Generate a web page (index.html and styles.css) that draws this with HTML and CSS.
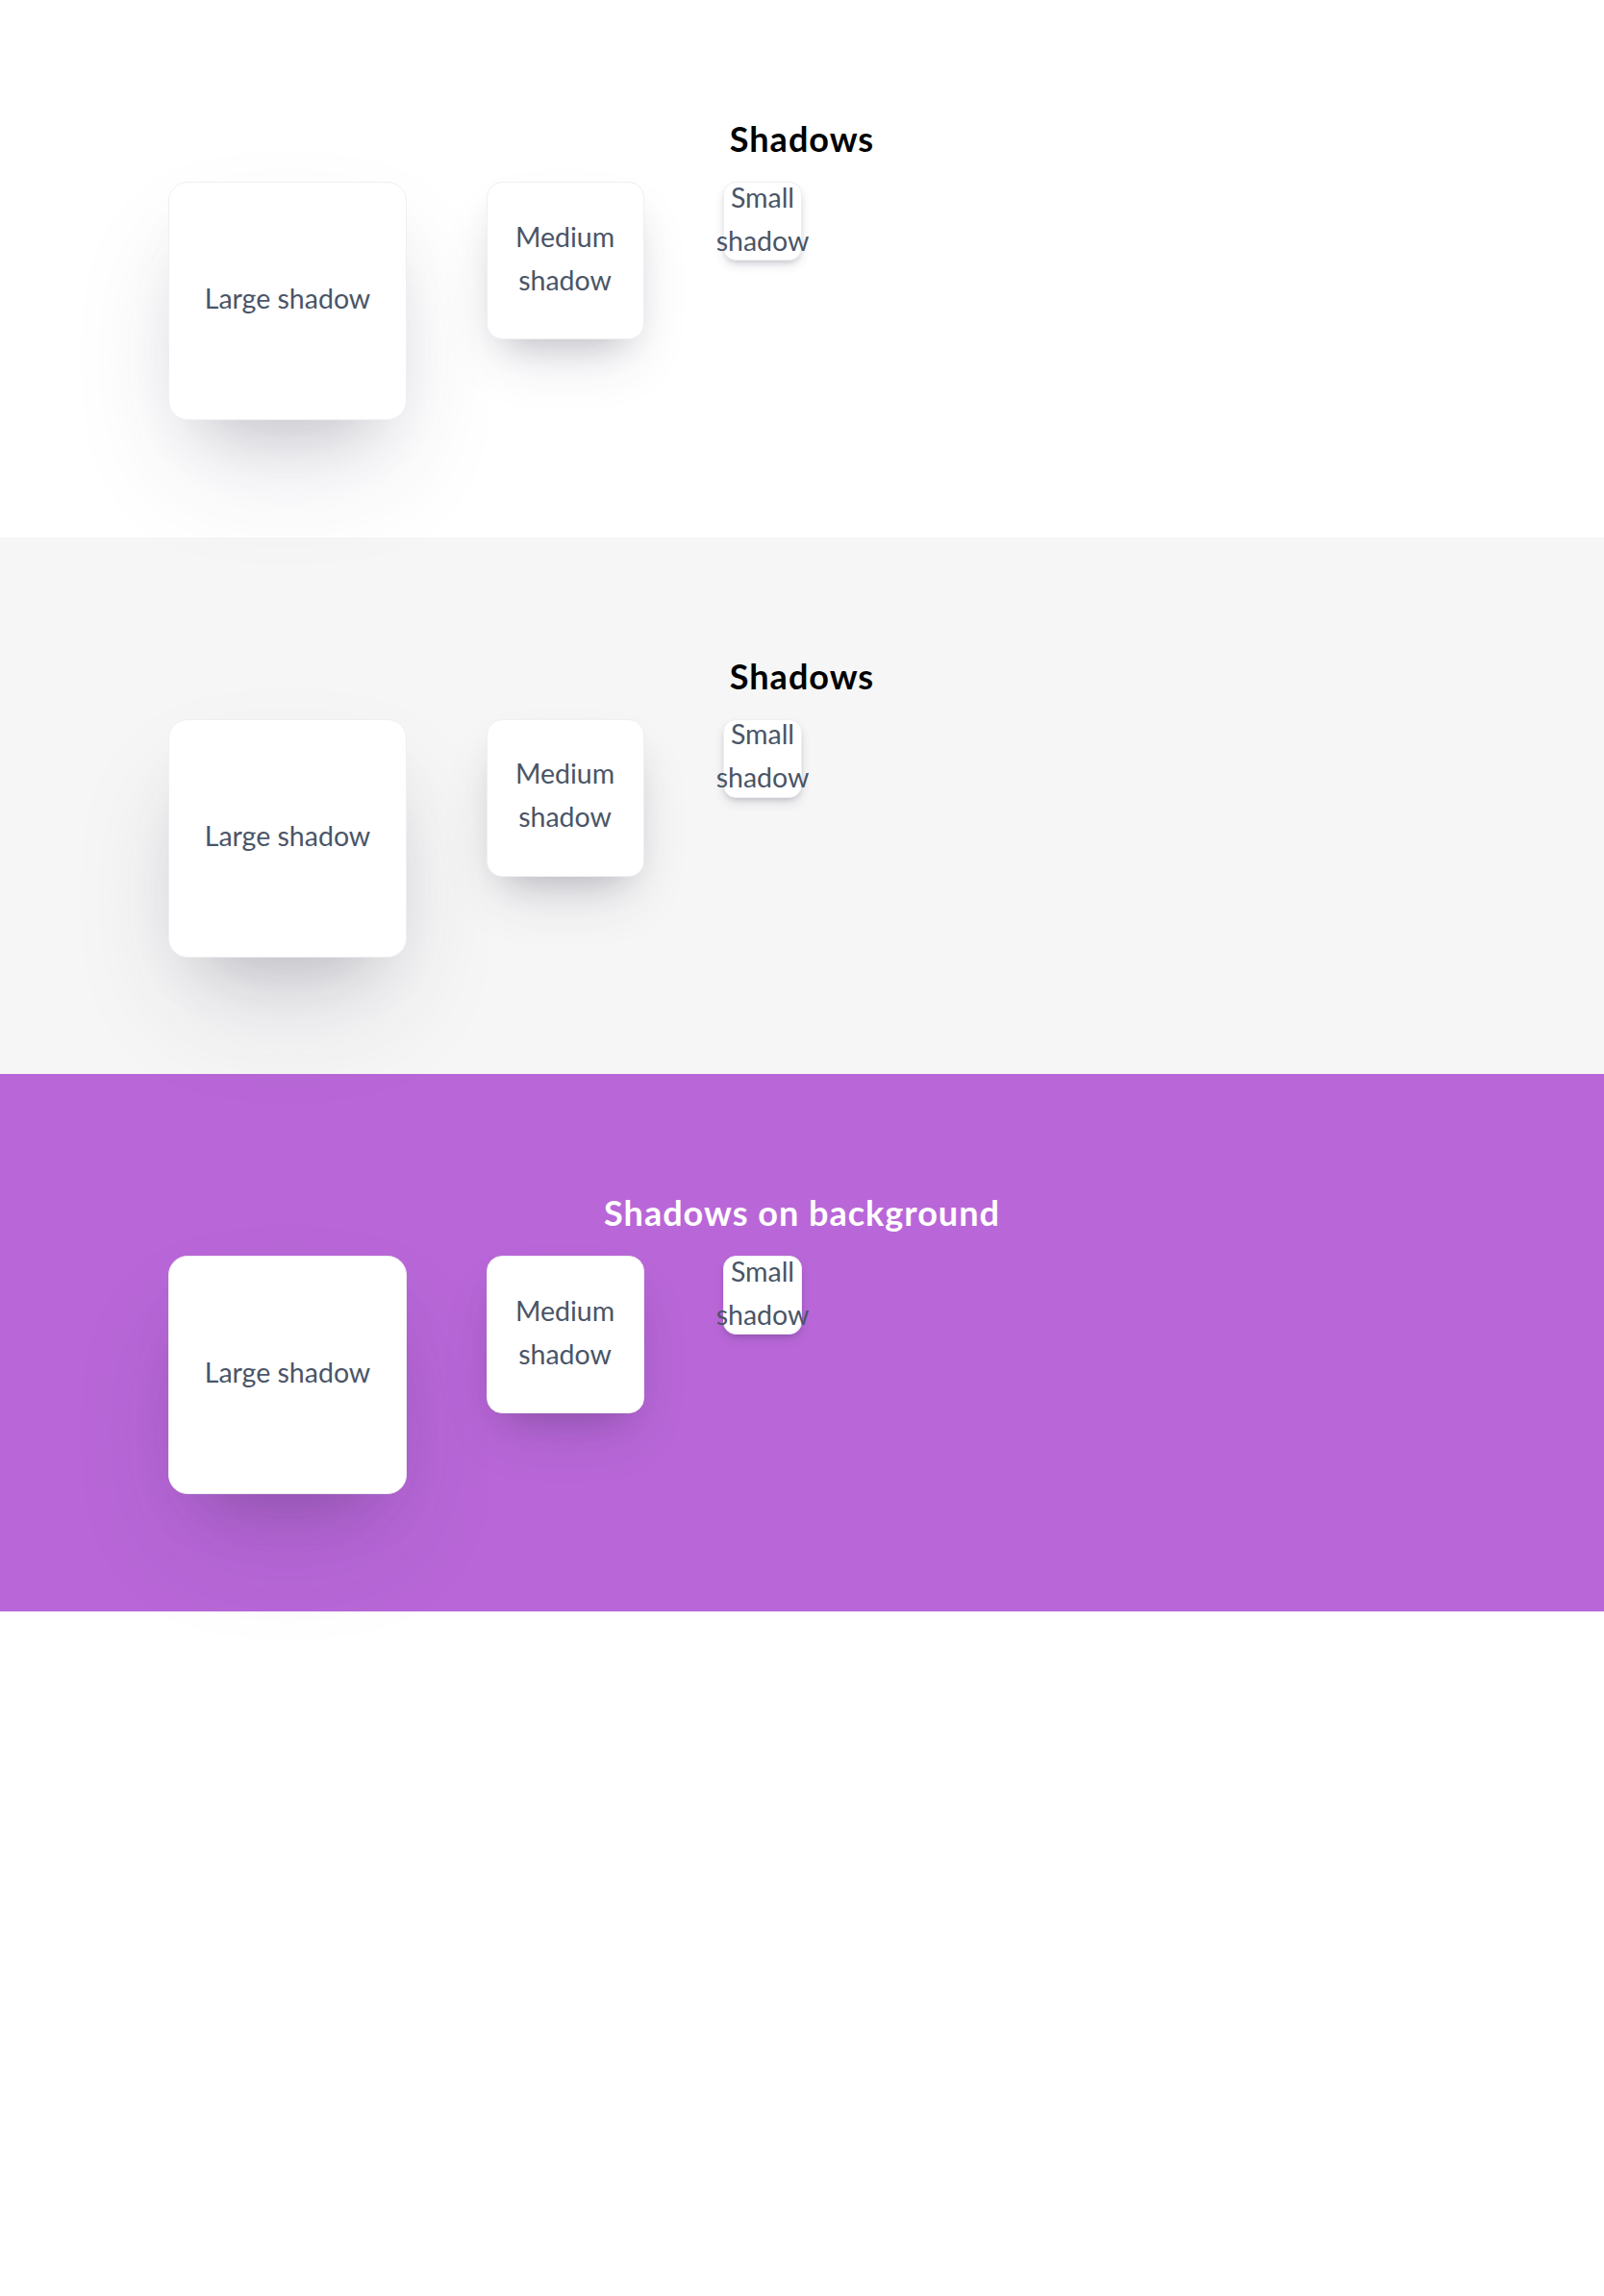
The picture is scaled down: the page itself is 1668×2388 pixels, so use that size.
FILE: index.html
```html
<!DOCTYPE html>
<html lang="en">
<head>
<meta charset="utf-8">
<title>Shadows</title>
<link rel="stylesheet" href="styles.css">
</head>
<body>
  <section class="panel panel-white">
    <h2 class="panel-title">Shadows</h2>
    <div class="card-row">
      <div class="card card-lg">Large shadow</div>
      <div class="card card-md">Medium shadow</div>
      <div class="card card-sm">Small shadow</div>
    </div>
  </section>
  <section class="panel panel-gray">
    <h2 class="panel-title">Shadows</h2>
    <div class="card-row">
      <div class="card card-lg">Large shadow</div>
      <div class="card card-md">Medium shadow</div>
      <div class="card card-sm">Small shadow</div>
    </div>
  </section>
  <section class="panel panel-purple">
    <h2 class="panel-title panel-title-light">Shadows on background</h2>
    <div class="card-row">
      <div class="card card-lg">Large shadow</div>
      <div class="card card-md">Medium shadow</div>
      <div class="card card-sm">Small shadow</div>
    </div>
  </section>
</body>
</html>
```

FILE: styles.css
```css
html, body {
  margin: 0;
  padding: 0;
  background: #ffffff;
}

body {
  min-height: 2388px;
  font-family: "Lato", "Noto Sans", sans-serif;
}

.panel {
  padding: 124px 175px 121.5px;
}

.panel-white { background: #ffffff; }
.panel-gray { background: #f6f6f6; }
.panel-purple { background: #b967d8; }

.panel-title {
  margin: 0 0 24px;
  text-align: center;
  font-size: 36px;
  line-height: 41px;
  letter-spacing: 1px;
  font-weight: 700;
  color: #000000;
}

.panel-title-light {
  color: #ffffff;
}

.card-row {
  display: flex;
  align-items: flex-start;
  gap: 82.5px;
}

.card {
  box-sizing: border-box;
  flex: none;
  display: flex;
  align-items: center;
  justify-content: center;
  padding-bottom: 5px;
  text-align: center;
  background: #ffffff;
  border: 1px solid #eeeff1;
  color: #4a5568;
  font-size: 28.5px;
  line-height: 45px;
}

.card-lg {
  width: 248px;
  height: 248px;
  border-radius: 20px;
  box-shadow: 0 60px 120px -20px rgba(50, 50, 93, 0.15), 0 36px 72px -36px rgba(0, 0, 0, 0.2);
}

.card-md {
  width: 164px;
  height: 164px;
  border-radius: 16px;
  box-shadow: 0 30px 60px -14px rgba(50, 50, 93, 0.16), 0 18px 36px -18px rgba(0, 0, 0, 0.2);
}

.card-sm {
  width: 82px;
  height: 82px;
  border-radius: 13px;
  box-shadow: 0 6px 12px -2px rgba(50, 50, 93, 0.16), 0 3px 7px -3px rgba(0, 0, 0, 0.2);
}
```
